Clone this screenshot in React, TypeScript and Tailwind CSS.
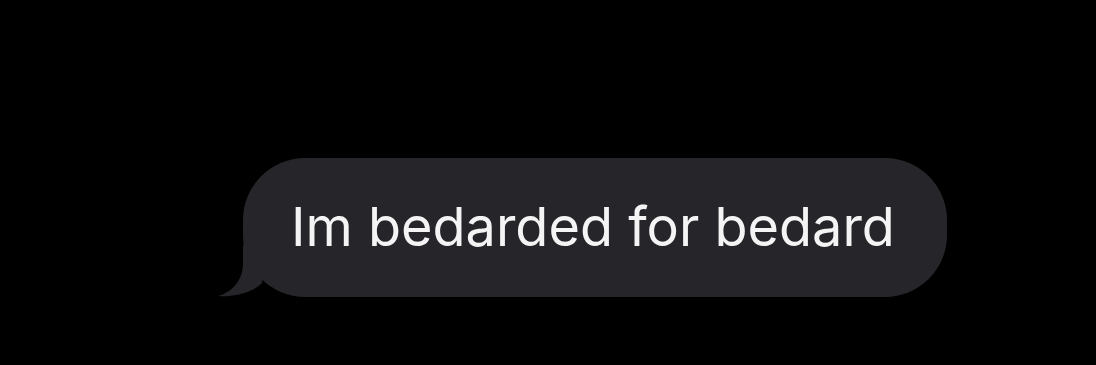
export default function App() {
  return (
    <div className="h-[365px] w-full bg-black pt-[158px] pl-[243px]">
      <div className="relative flex h-[139px] w-[704px] items-center rounded-[62px] bg-[#262529] pl-[48px]">
        <svg
          className="absolute bottom-0 left-[-25px]"
          width="60"
          height="52"
          viewBox="0 0 60 52"
          fill="#262529"
        >
          <path d="M25 0 L25 18 C25 36 14 47 0 51 C10 52 24 50 34 45 C38 43 41 41 44 38 L50 0 Z" />
        </svg>
        <span className="font-['Inter',sans-serif] text-[54px] leading-none text-[#f4f4f5] mt-[-2px]">
          Im bedarded for bedard
        </span>
      </div>
    </div>
  )
}
